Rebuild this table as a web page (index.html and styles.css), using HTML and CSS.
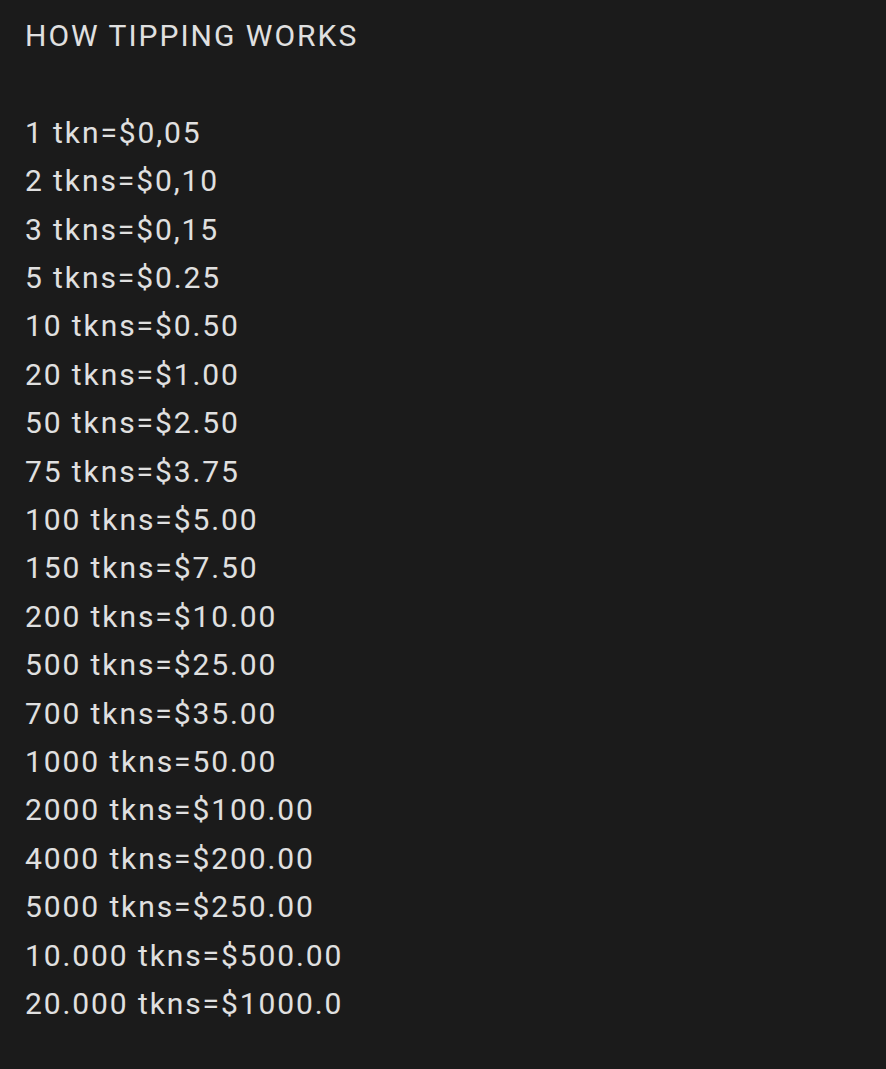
FILE: index.html
```html
<!DOCTYPE html>
<html lang="en">
<head>
<meta charset="utf-8">
<link rel="stylesheet" href="styles.css">
<title>How tipping works</title>
</head>
<body>
<main class="note">
  <h1 class="title">HOW TIPPING WORKS</h1>
  <ul class="rates">
    <li>1 tkn=$0,05</li>
    <li>2 tkns=$0,10</li>
    <li>3 tkns=$0,15</li>
    <li>5 tkns=$0.25</li>
    <li>10 tkns=$0.50</li>
    <li>20 tkns=$1.00</li>
    <li>50 tkns=$2.50</li>
    <li>75 tkns=$3.75</li>
    <li>100 tkns=$5.00</li>
    <li>150 tkns=$7.50</li>
    <li>200 tkns=$10.00</li>
    <li>500 tkns=$25.00</li>
    <li>700 tkns=$35.00</li>
    <li>1000 tkns=50.00</li>
    <li>2000 tkns=$100.00</li>
    <li>4000 tkns=$200.00</li>
    <li>5000 tkns=$250.00</li>
    <li>10.000 tkns=$500.00</li>
    <li>20.000 tkns=$1000.0</li>
  </ul>
</main>
</body>
</html>
```

FILE: styles.css
```css
html, body {
  margin: 0;
  padding: 0;
  background: #1b1b1b;
}
body {
  min-height: 1069px;
  font-family: Roboto, "Noto Sans", sans-serif;
  color: #e0e0e0;
}
.note {
  padding: 12px 0 0 25px;
  font-size: 30px;
  line-height: 48.4px;
  letter-spacing: 1.9px;
}
.title {
  margin: 0 0 48.4px 0;
  font-size: 30px;
  font-weight: 400;
  line-height: 48.4px;
  letter-spacing: 2px;
}
.rates {
  list-style: none;
  margin: 0;
  padding: 0;
}
```
